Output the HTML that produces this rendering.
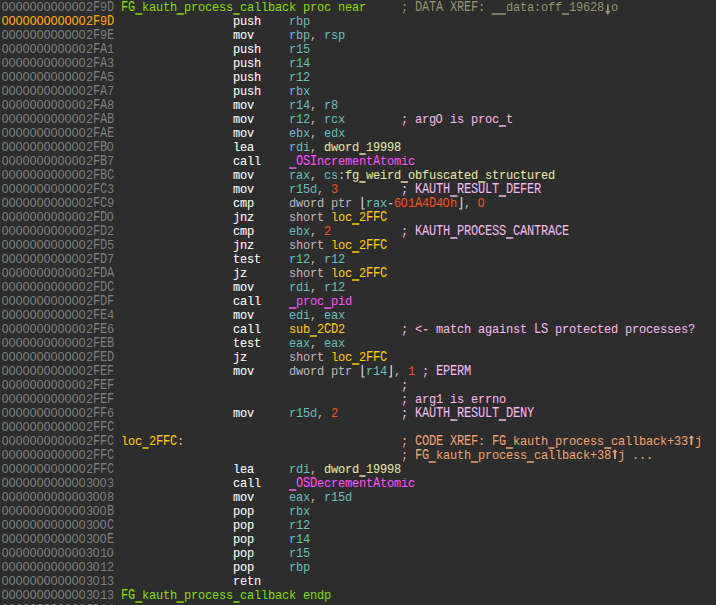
<!DOCTYPE html><html><head><meta charset="utf-8"><style>
html,body{margin:0;padding:0;background:#2d2d2d;width:716px;height:605px;overflow:hidden}
#v{position:absolute;left:0;top:0;width:716px;height:605px;overflow:hidden}
.r{position:absolute;left:0;width:716px;height:14px;overflow:hidden}
.t{position:absolute;left:2px;top:0;width:800px;height:14px;line-height:14px;white-space:pre;font-family:"Liberation Mono",monospace;font-size:13.3px;letter-spacing:-0.20222px;transform-origin:0 10px;transform:scale(0.9,1.0);-webkit-text-stroke:0.1px currentColor;text-shadow:0 0 1px rgba(0,0,0,0.6)}
.ad{color:#808080;--c:#808080}
.ca{color:#ffaa00;--c:#ffaa00}
.fn{color:#8cdc00;--c:#8cdc00}
.mn{color:#ffffff;--c:#ffffff}
.rg{color:#6ebfbf;--c:#6ebfbf}
.pu{color:#c0c0c0;--c:#c0c0c0}
.kw{color:#bcbcbc;--c:#bcbcbc}
.nm{color:#eb5a28;--c:#eb5a28}
.lc{color:#fad000;--c:#fad000}
.dt{color:#e6e6aa;--c:#e6e6aa}
.im{color:#f858f8;--c:#f858f8}
.cm{color:#f5bbee;--c:#f5bbee}
.dx{color:#969670;--c:#969670}
.cx{color:#f0a573;--c:#f0a573}
.u{display:inline-block;width:7.777777777777778px;height:14px;vertical-align:top;position:relative}.u::after{content:"";position:absolute;left:0;width:7.777777777777778px;top:12.0000px;height:2.0000px;background:var(--c);opacity:0.75}
.A{display:inline-block;vertical-align:top;height:14px;transform-origin:0 10px;transform:scaleY(1.0000)}
.K{display:inline-block;vertical-align:top;height:14px;transform-origin:0 10px;transform:scaleY(1.1)}
.Z{position:relative;left:-0.6666666666666666px}
.ar{display:inline-block;width:7.777777777777778px;height:14px;vertical-align:top;position:relative}.ar svg{position:absolute;left:0;overflow:visible}
</style></head><body><div id="v">
<div class="r" style="top:1px"><div class="t"><span class="A"><span class="ad"><span class="Z">OOOOOOOOOOOO</span>2<span class="K">F</span>9<span class="K">D</span></span></span> <span class="fn"><span class="K">FG</span><span class="u"></span>kauth<span class="u"></span>process<span class="u"></span>callback proc near</span>     <span class="dx">; <span class="K">DATA</span> <span class="K">XREF</span>: <span class="u"></span><span class="u"></span>data<span>:</span>off<span class="u"></span>19628<span class="ar"><svg width="7.7778" height="14.0000" style="top:0.0000px" viewBox="0 0 7 14" preserveAspectRatio="none"><path d="M2.9 3.5 H4.6 V9.8 H6.3 L3.75 14 L1.0 9.8 H2.9 Z" fill="currentColor"/></svg></span>o</span></div></div>
<div class="r" style="top:15px"><div class="t"><span class="A"><span class="ca"><span class="Z">OOOOOOOOOOOO</span>2<span class="K">F</span>9<span class="K">D</span></span></span>                 <span class="mn">push</span>    <span class="rg">rbp</span></div></div>
<div class="r" style="top:29px"><div class="t"><span class="A"><span class="ad"><span class="Z">OOOOOOOOOOOO</span>2<span class="K">F</span>9<span class="K">E</span></span></span>                 <span class="mn">mov</span>     <span class="rg">rbp</span><span class="pu">, </span><span class="rg">rsp</span></div></div>
<div class="r" style="top:43px"><div class="t"><span class="A"><span class="ad"><span class="Z">OOOOOOOOOOOO</span>2<span class="K">FA</span>1</span></span>                 <span class="mn">push</span>    <span class="rg">r15</span></div></div>
<div class="r" style="top:57px"><div class="t"><span class="A"><span class="ad"><span class="Z">OOOOOOOOOOOO</span>2<span class="K">FA</span>3</span></span>                 <span class="mn">push</span>    <span class="rg">r14</span></div></div>
<div class="r" style="top:71px"><div class="t"><span class="A"><span class="ad"><span class="Z">OOOOOOOOOOOO</span>2<span class="K">FA</span>5</span></span>                 <span class="mn">push</span>    <span class="rg">r12</span></div></div>
<div class="r" style="top:85px"><div class="t"><span class="A"><span class="ad"><span class="Z">OOOOOOOOOOOO</span>2<span class="K">FA</span>7</span></span>                 <span class="mn">push</span>    <span class="rg">rbx</span></div></div>
<div class="r" style="top:99px"><div class="t"><span class="A"><span class="ad"><span class="Z">OOOOOOOOOOOO</span>2<span class="K">FA</span>8</span></span>                 <span class="mn">mov</span>     <span class="rg">r14</span><span class="pu">, </span><span class="rg">r8</span></div></div>
<div class="r" style="top:113px"><div class="t"><span class="A"><span class="ad"><span class="Z">OOOOOOOOOOOO</span>2<span class="K">FAB</span></span></span>                 <span class="mn">mov</span>     <span class="rg">r12</span><span class="pu">, </span><span class="rg">rcx</span>        <span class="cm">; arg<span class="Z">O</span> is proc<span class="u"></span>t</span></div></div>
<div class="r" style="top:127px"><div class="t"><span class="A"><span class="ad"><span class="Z">OOOOOOOOOOOO</span>2<span class="K">FAE</span></span></span>                 <span class="mn">mov</span>     <span class="rg">ebx</span><span class="pu">, </span><span class="rg">edx</span></div></div>
<div class="r" style="top:141px"><div class="t"><span class="A"><span class="ad"><span class="Z">OOOOOOOOOOOO</span>2<span class="K">FB</span><span class="Z">O</span></span></span>                 <span class="mn">lea</span>     <span class="rg">rdi</span><span class="pu">, </span><span class="dt">dword<span class="u"></span>19998</span></div></div>
<div class="r" style="top:155px"><div class="t"><span class="A"><span class="ad"><span class="Z">OOOOOOOOOOOO</span>2<span class="K">FB</span>7</span></span>                 <span class="mn">call</span>    <span class="im"><span class="u"></span><span class="K">OSI</span>ncrement<span class="K">A</span>tomic</span></div></div>
<div class="r" style="top:169px"><div class="t"><span class="A"><span class="ad"><span class="Z">OOOOOOOOOOOO</span>2<span class="K">FBC</span></span></span>                 <span class="mn">mov</span>     <span class="rg">rax</span><span class="pu">, </span><span class="rg">cs</span><span class="pu">:</span><span class="dt">fg<span class="u"></span>weird<span class="u"></span>obfuscated<span class="u"></span>structured</span></div></div>
<div class="r" style="top:183px"><div class="t"><span class="A"><span class="ad"><span class="Z">OOOOOOOOOOOO</span>2<span class="K">FC</span>3</span></span>                 <span class="mn">mov</span>     <span class="rg">r15d</span><span class="pu">, </span><span class="nm">3</span>         <span class="cm">; <span class="K">KAUTH</span><span class="u"></span><span class="K">RESULT</span><span class="u"></span><span class="K">DEFER</span></span></div></div>
<div class="r" style="top:197px"><div class="t"><span class="A"><span class="ad"><span class="Z">OOOOOOOOOOOO</span>2<span class="K">FC</span>9</span></span>                 <span class="mn">cmp</span>     <span class="kw">dword ptr </span><span class="pu"><span class="ar"><svg width="7.7778" height="14.0000" style="top:0.0000px" viewBox="0 0 7 14" preserveAspectRatio="none"><path d="M2.3 0 H3.8 V11.2 H5.5 V12.6 H2.3 Z" fill="currentColor"/></svg></span></span><span class="rg">rax</span><span class="pu">-</span><span class="nm">6<span class="Z">O</span>1<span class="K">A</span>4<span class="K">D</span>4<span class="Z">O</span>h</span><span class="pu"><span class="ar"><svg width="7.7778" height="14.0000" style="top:0.0000px" viewBox="0 0 7 14" preserveAspectRatio="none"><path d="M3.4 0 H4.9 V12.6 H1.7 V11.2 H3.4 Z" fill="currentColor"/></svg></span>, </span><span class="nm"><span class="Z">O</span></span></div></div>
<div class="r" style="top:211px"><div class="t"><span class="A"><span class="ad"><span class="Z">OOOOOOOOOOOO</span>2<span class="K">FD</span><span class="Z">O</span></span></span>                 <span class="mn">jnz</span>     <span class="kw">short </span><span class="lc">loc<span class="u"></span>2<span class="K">FFC</span></span></div></div>
<div class="r" style="top:225px"><div class="t"><span class="A"><span class="ad"><span class="Z">OOOOOOOOOOOO</span>2<span class="K">FD</span>2</span></span>                 <span class="mn">cmp</span>     <span class="rg">ebx</span><span class="pu">, </span><span class="nm">2</span>          <span class="cm">; <span class="K">KAUTH</span><span class="u"></span><span class="K">PROCESS</span><span class="u"></span><span class="K">CANTRACE</span></span></div></div>
<div class="r" style="top:239px"><div class="t"><span class="A"><span class="ad"><span class="Z">OOOOOOOOOOOO</span>2<span class="K">FD</span>5</span></span>                 <span class="mn">jnz</span>     <span class="kw">short </span><span class="lc">loc<span class="u"></span>2<span class="K">FFC</span></span></div></div>
<div class="r" style="top:253px"><div class="t"><span class="A"><span class="ad"><span class="Z">OOOOOOOOOOOO</span>2<span class="K">FD</span>7</span></span>                 <span class="mn">test</span>    <span class="rg">r12</span><span class="pu">, </span><span class="rg">r12</span></div></div>
<div class="r" style="top:267px"><div class="t"><span class="A"><span class="ad"><span class="Z">OOOOOOOOOOOO</span>2<span class="K">FDA</span></span></span>                 <span class="mn">jz</span>      <span class="kw">short </span><span class="lc">loc<span class="u"></span>2<span class="K">FFC</span></span></div></div>
<div class="r" style="top:281px"><div class="t"><span class="A"><span class="ad"><span class="Z">OOOOOOOOOOOO</span>2<span class="K">FDC</span></span></span>                 <span class="mn">mov</span>     <span class="rg">rdi</span><span class="pu">, </span><span class="rg">r12</span></div></div>
<div class="r" style="top:295px"><div class="t"><span class="A"><span class="ad"><span class="Z">OOOOOOOOOOOO</span>2<span class="K">FDF</span></span></span>                 <span class="mn">call</span>    <span class="im"><span class="u"></span>proc<span class="u"></span>pid</span></div></div>
<div class="r" style="top:309px"><div class="t"><span class="A"><span class="ad"><span class="Z">OOOOOOOOOOOO</span>2<span class="K">FE</span>4</span></span>                 <span class="mn">mov</span>     <span class="rg">edi</span><span class="pu">, </span><span class="rg">eax</span></div></div>
<div class="r" style="top:323px"><div class="t"><span class="A"><span class="ad"><span class="Z">OOOOOOOOOOOO</span>2<span class="K">FE</span>6</span></span>                 <span class="mn">call</span>    <span class="lc">sub<span class="u"></span>2<span class="K">CD</span>2</span>        <span class="cm">; &lt;- match against <span class="K">LS</span> protected processes?</span></div></div>
<div class="r" style="top:337px"><div class="t"><span class="A"><span class="ad"><span class="Z">OOOOOOOOOOOO</span>2<span class="K">FEB</span></span></span>                 <span class="mn">test</span>    <span class="rg">eax</span><span class="pu">, </span><span class="rg">eax</span></div></div>
<div class="r" style="top:351px"><div class="t"><span class="A"><span class="ad"><span class="Z">OOOOOOOOOOOO</span>2<span class="K">FED</span></span></span>                 <span class="mn">jz</span>      <span class="kw">short </span><span class="lc">loc<span class="u"></span>2<span class="K">FFC</span></span></div></div>
<div class="r" style="top:365px"><div class="t"><span class="A"><span class="ad"><span class="Z">OOOOOOOOOOOO</span>2<span class="K">FEF</span></span></span>                 <span class="mn">mov</span>     <span class="kw">dword ptr </span><span class="pu"><span class="ar"><svg width="7.7778" height="14.0000" style="top:0.0000px" viewBox="0 0 7 14" preserveAspectRatio="none"><path d="M2.3 0 H3.8 V11.2 H5.5 V12.6 H2.3 Z" fill="currentColor"/></svg></span></span><span class="rg">r14</span><span class="pu"><span class="ar"><svg width="7.7778" height="14.0000" style="top:0.0000px" viewBox="0 0 7 14" preserveAspectRatio="none"><path d="M3.4 0 H4.9 V12.6 H1.7 V11.2 H3.4 Z" fill="currentColor"/></svg></span>, </span><span class="nm">1</span><span class="pu"> </span><span class="cm">; <span class="K">EPERM</span></span></div></div>
<div class="r" style="top:379px"><div class="t"><span class="A"><span class="ad"><span class="Z">OOOOOOOOOOOO</span>2<span class="K">FEF</span></span></span>                                         <span class="cm">;</span></div></div>
<div class="r" style="top:393px"><div class="t"><span class="A"><span class="ad"><span class="Z">OOOOOOOOOOOO</span>2<span class="K">FEF</span></span></span>                                         <span class="cm">; arg1 is errno</span></div></div>
<div class="r" style="top:407px"><div class="t"><span class="A"><span class="ad"><span class="Z">OOOOOOOOOOOO</span>2<span class="K">FF</span>6</span></span>                 <span class="mn">mov</span>     <span class="rg">r15d</span><span class="pu">, </span><span class="nm">2</span>         <span class="cm">; <span class="K">KAUTH</span><span class="u"></span><span class="K">RESULT</span><span class="u"></span><span class="K">DENY</span></span></div></div>
<div class="r" style="top:421px"><div class="t"><span class="A"><span class="ad"><span class="Z">OOOOOOOOOOOO</span>2<span class="K">FFC</span></span></span></div></div>
<div class="r" style="top:435px"><div class="t"><span class="A"><span class="ad"><span class="Z">OOOOOOOOOOOO</span>2<span class="K">FFC</span></span></span> <span class="lc">loc<span class="u"></span>2<span class="K">FFC</span></span><span class="pu">:</span>                               <span class="cx">; <span class="K">CODE</span> <span class="K">XREF</span>: <span class="K">FG</span><span class="u"></span>kauth<span class="u"></span>process<span class="u"></span>callback+33<span class="ar"><svg width="7.7778" height="14.0000" style="top:0.0000px" viewBox="0 0 7 14" preserveAspectRatio="none"><path d="M3.6 0.2 L6.3 3.3 H4.5 V10 H2.7 V3.3 H0.9 Z" fill="currentColor"/></svg></span>j</span></div></div>
<div class="r" style="top:449px"><div class="t"><span class="A"><span class="ad"><span class="Z">OOOOOOOOOOOO</span>2<span class="K">FFC</span></span></span>                                         <span class="cx">; <span class="K">FG</span><span class="u"></span>kauth<span class="u"></span>process<span class="u"></span>callback+38<span class="ar"><svg width="7.7778" height="14.0000" style="top:0.0000px" viewBox="0 0 7 14" preserveAspectRatio="none"><path d="M3.6 0.2 L6.3 3.3 H4.5 V10 H2.7 V3.3 H0.9 Z" fill="currentColor"/></svg></span>j ...</span></div></div>
<div class="r" style="top:463px"><div class="t"><span class="A"><span class="ad"><span class="Z">OOOOOOOOOOOO</span>2<span class="K">FFC</span></span></span>                 <span class="mn">lea</span>     <span class="rg">rdi</span><span class="pu">, </span><span class="dt">dword<span class="u"></span>19998</span></div></div>
<div class="r" style="top:477px"><div class="t"><span class="A"><span class="ad"><span class="Z">OOOOOOOOOOOO</span>3<span class="Z">OO</span>3</span></span>                 <span class="mn">call</span>    <span class="im"><span class="u"></span><span class="K">OSD</span>ecrement<span class="K">A</span>tomic</span></div></div>
<div class="r" style="top:491px"><div class="t"><span class="A"><span class="ad"><span class="Z">OOOOOOOOOOOO</span>3<span class="Z">OO</span>8</span></span>                 <span class="mn">mov</span>     <span class="rg">eax</span><span class="pu">, </span><span class="rg">r15d</span></div></div>
<div class="r" style="top:505px"><div class="t"><span class="A"><span class="ad"><span class="Z">OOOOOOOOOOOO</span>3<span class="Z">OO</span><span class="K">B</span></span></span>                 <span class="mn">pop</span>     <span class="rg">rbx</span></div></div>
<div class="r" style="top:519px"><div class="t"><span class="A"><span class="ad"><span class="Z">OOOOOOOOOOOO</span>3<span class="Z">OO</span><span class="K">C</span></span></span>                 <span class="mn">pop</span>     <span class="rg">r12</span></div></div>
<div class="r" style="top:533px"><div class="t"><span class="A"><span class="ad"><span class="Z">OOOOOOOOOOOO</span>3<span class="Z">OO</span><span class="K">E</span></span></span>                 <span class="mn">pop</span>     <span class="rg">r14</span></div></div>
<div class="r" style="top:547px"><div class="t"><span class="A"><span class="ad"><span class="Z">OOOOOOOOOOOO</span>3<span class="Z">O</span>1<span class="Z">O</span></span></span>                 <span class="mn">pop</span>     <span class="rg">r15</span></div></div>
<div class="r" style="top:561px"><div class="t"><span class="A"><span class="ad"><span class="Z">OOOOOOOOOOOO</span>3<span class="Z">O</span>12</span></span>                 <span class="mn">pop</span>     <span class="rg">rbp</span></div></div>
<div class="r" style="top:575px"><div class="t"><span class="A"><span class="ad"><span class="Z">OOOOOOOOOOOO</span>3<span class="Z">O</span>13</span></span>                 <span class="mn">retn</span></div></div>
<div class="r" style="top:589px"><div class="t"><span class="A"><span class="ad"><span class="Z">OOOOOOOOOOOO</span>3<span class="Z">O</span>13</span></span> <span class="fn"><span class="K">FG</span><span class="u"></span>kauth<span class="u"></span>process<span class="u"></span>callback endp</span></div></div>
<div class="r" style="top:603px"><div class="t"><span class="A"><span class="ad"><span class="Z">OOOOOOOOOOOO</span>3<span class="Z">O</span>14</span></span></div></div>
</div></body></html>
